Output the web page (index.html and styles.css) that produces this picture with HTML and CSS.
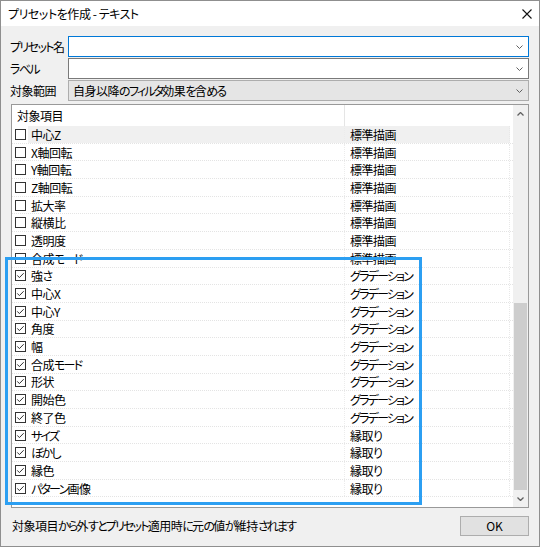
FILE: index.html
```html
<!DOCTYPE html>
<html lang="ja">
<head>
<meta charset="utf-8">
<title>プリセットを作成 - テキスト</title>
<link rel="stylesheet" href="styles.css">
</head>
<body>
<div class="window">
  <div class="titlebar">
    <span class="title">プリセットを作成 - テキスト</span>
    <svg class="close" width="10" height="10" viewBox="0 0 10 10"><path d="M0.5 0.5 L9.5 9.5 M9.5 0.5 L0.5 9.5" stroke="#111" stroke-width="1.1" fill="none"/></svg>
  </div>
  <div class="body">
    <div class="form">
      <label class="flabel"><span class="k">プリセット</span>名</label>
      <div class="combo focus"><span class="ctext"></span><svg class="chev" width="7" height="4" viewBox="0 0 7 4"><path d="M0.5 0.5 L3.5 3.5 L6.5 0.5" stroke="#606060" fill="none"/></svg></div>
      <label class="flabel"><span class="k">ラベル</span></label>
      <div class="combo"><span class="ctext"></span><svg class="chev" width="7" height="4" viewBox="0 0 7 4"><path d="M0.5 0.5 L3.5 3.5 L6.5 0.5" stroke="#606060" fill="none"/></svg></div>
      <label class="flabel">対象範囲</label>
      <div class="combo readonly"><span class="ctext">自身以降<span class="k">のフィルタ</span>効果<span class="k">を</span>含<span class="k">める</span></span><svg class="chev" width="7" height="4" viewBox="0 0 7 4"><path d="M0.5 0.5 L3.5 3.5 L6.5 0.5" stroke="#606060" fill="none"/></svg></div>
    </div>
    <div class="list">
      <div class="list-main">
        <div class="list-header"><div class="hcol1">対象項目</div><div class="hcol2"></div></div>
        <div class="rows">
          <div class="row selected"><span class="check"><svg width="11" height="11" viewBox="0 0 11 11"><rect x="0.5" y="0.5" width="10" height="10" fill="#fff" stroke="#333"/></svg></span><span class="cells"><span class="name">中心Z</span><span class="value">標準描画</span></span></div>
          <div class="row"><span class="check"><svg width="11" height="11" viewBox="0 0 11 11"><rect x="0.5" y="0.5" width="10" height="10" fill="#fff" stroke="#333"/></svg></span><span class="cells"><span class="name">X軸回転</span><span class="value">標準描画</span></span></div>
          <div class="row"><span class="check"><svg width="11" height="11" viewBox="0 0 11 11"><rect x="0.5" y="0.5" width="10" height="10" fill="#fff" stroke="#333"/></svg></span><span class="cells"><span class="name">Y軸回転</span><span class="value">標準描画</span></span></div>
          <div class="row"><span class="check"><svg width="11" height="11" viewBox="0 0 11 11"><rect x="0.5" y="0.5" width="10" height="10" fill="#fff" stroke="#333"/></svg></span><span class="cells"><span class="name">Z軸回転</span><span class="value">標準描画</span></span></div>
          <div class="row"><span class="check"><svg width="11" height="11" viewBox="0 0 11 11"><rect x="0.5" y="0.5" width="10" height="10" fill="#fff" stroke="#333"/></svg></span><span class="cells"><span class="name">拡大率</span><span class="value">標準描画</span></span></div>
          <div class="row"><span class="check"><svg width="11" height="11" viewBox="0 0 11 11"><rect x="0.5" y="0.5" width="10" height="10" fill="#fff" stroke="#333"/></svg></span><span class="cells"><span class="name">縦横比</span><span class="value">標準描画</span></span></div>
          <div class="row"><span class="check"><svg width="11" height="11" viewBox="0 0 11 11"><rect x="0.5" y="0.5" width="10" height="10" fill="#fff" stroke="#333"/></svg></span><span class="cells"><span class="name">透明度</span><span class="value">標準描画</span></span></div>
          <div class="row"><span class="check"><svg width="11" height="11" viewBox="0 0 11 11"><rect x="0.5" y="0.5" width="10" height="10" fill="#fff" stroke="#333"/></svg></span><span class="cells"><span class="name">合成<span class="k">モード</span></span><span class="value">標準描画</span></span></div>
          <div class="row"><span class="check"><svg width="11" height="11" viewBox="0 0 11 11"><rect x="0.5" y="0.5" width="10" height="10" fill="#fff" stroke="#333"/><path d="M2.3 5.4 L4.4 7.6 L8.7 3.2" stroke="#333" fill="none"/></svg></span><span class="cells"><span class="name">強<span class="k">さ</span></span><span class="value"><span class="k">グラデーション</span></span></span></div>
          <div class="row"><span class="check"><svg width="11" height="11" viewBox="0 0 11 11"><rect x="0.5" y="0.5" width="10" height="10" fill="#fff" stroke="#333"/><path d="M2.3 5.4 L4.4 7.6 L8.7 3.2" stroke="#333" fill="none"/></svg></span><span class="cells"><span class="name">中心X</span><span class="value"><span class="k">グラデーション</span></span></span></div>
          <div class="row"><span class="check"><svg width="11" height="11" viewBox="0 0 11 11"><rect x="0.5" y="0.5" width="10" height="10" fill="#fff" stroke="#333"/><path d="M2.3 5.4 L4.4 7.6 L8.7 3.2" stroke="#333" fill="none"/></svg></span><span class="cells"><span class="name">中心Y</span><span class="value"><span class="k">グラデーション</span></span></span></div>
          <div class="row"><span class="check"><svg width="11" height="11" viewBox="0 0 11 11"><rect x="0.5" y="0.5" width="10" height="10" fill="#fff" stroke="#333"/><path d="M2.3 5.4 L4.4 7.6 L8.7 3.2" stroke="#333" fill="none"/></svg></span><span class="cells"><span class="name">角度</span><span class="value"><span class="k">グラデーション</span></span></span></div>
          <div class="row"><span class="check"><svg width="11" height="11" viewBox="0 0 11 11"><rect x="0.5" y="0.5" width="10" height="10" fill="#fff" stroke="#333"/><path d="M2.3 5.4 L4.4 7.6 L8.7 3.2" stroke="#333" fill="none"/></svg></span><span class="cells"><span class="name">幅</span><span class="value"><span class="k">グラデーション</span></span></span></div>
          <div class="row"><span class="check"><svg width="11" height="11" viewBox="0 0 11 11"><rect x="0.5" y="0.5" width="10" height="10" fill="#fff" stroke="#333"/><path d="M2.3 5.4 L4.4 7.6 L8.7 3.2" stroke="#333" fill="none"/></svg></span><span class="cells"><span class="name">合成<span class="k">モード</span></span><span class="value"><span class="k">グラデーション</span></span></span></div>
          <div class="row"><span class="check"><svg width="11" height="11" viewBox="0 0 11 11"><rect x="0.5" y="0.5" width="10" height="10" fill="#fff" stroke="#333"/><path d="M2.3 5.4 L4.4 7.6 L8.7 3.2" stroke="#333" fill="none"/></svg></span><span class="cells"><span class="name">形状</span><span class="value"><span class="k">グラデーション</span></span></span></div>
          <div class="row"><span class="check"><svg width="11" height="11" viewBox="0 0 11 11"><rect x="0.5" y="0.5" width="10" height="10" fill="#fff" stroke="#333"/><path d="M2.3 5.4 L4.4 7.6 L8.7 3.2" stroke="#333" fill="none"/></svg></span><span class="cells"><span class="name">開始色</span><span class="value"><span class="k">グラデーション</span></span></span></div>
          <div class="row"><span class="check"><svg width="11" height="11" viewBox="0 0 11 11"><rect x="0.5" y="0.5" width="10" height="10" fill="#fff" stroke="#333"/><path d="M2.3 5.4 L4.4 7.6 L8.7 3.2" stroke="#333" fill="none"/></svg></span><span class="cells"><span class="name">終了色</span><span class="value"><span class="k">グラデーション</span></span></span></div>
          <div class="row"><span class="check"><svg width="11" height="11" viewBox="0 0 11 11"><rect x="0.5" y="0.5" width="10" height="10" fill="#fff" stroke="#333"/><path d="M2.3 5.4 L4.4 7.6 L8.7 3.2" stroke="#333" fill="none"/></svg></span><span class="cells"><span class="name"><span class="k">サイズ</span></span><span class="value">縁取<span class="k">り</span></span></span></div>
          <div class="row"><span class="check"><svg width="11" height="11" viewBox="0 0 11 11"><rect x="0.5" y="0.5" width="10" height="10" fill="#fff" stroke="#333"/><path d="M2.3 5.4 L4.4 7.6 L8.7 3.2" stroke="#333" fill="none"/></svg></span><span class="cells"><span class="name"><span class="k">ぼかし</span></span><span class="value">縁取<span class="k">り</span></span></span></div>
          <div class="row"><span class="check"><svg width="11" height="11" viewBox="0 0 11 11"><rect x="0.5" y="0.5" width="10" height="10" fill="#fff" stroke="#333"/><path d="M2.3 5.4 L4.4 7.6 L8.7 3.2" stroke="#333" fill="none"/></svg></span><span class="cells"><span class="name">縁色</span><span class="value">縁取<span class="k">り</span></span></span></div>
          <div class="row"><span class="check"><svg width="11" height="11" viewBox="0 0 11 11"><rect x="0.5" y="0.5" width="10" height="10" fill="#fff" stroke="#333"/><path d="M2.3 5.4 L4.4 7.6 L8.7 3.2" stroke="#333" fill="none"/></svg></span><span class="cells"><span class="name"><span class="k">パターン</span>画像</span><span class="value">縁取<span class="k">り</span></span></span></div>
        </div>
      </div>
      <div class="scrollbar">
        <div class="sb-arrow"><svg width="7" height="4" viewBox="0 0 7 4"><path d="M0.5 3.5 L3.5 0.5 L6.5 3.5" stroke="#606060" stroke-width="1.3" fill="none"/></svg></div>
        <div class="track"><div class="thumb"></div></div>
        <div class="sb-arrow"><svg width="7" height="4" viewBox="0 0 7 4"><path d="M0.5 0.5 L3.5 3.5 L6.5 0.5" stroke="#606060" stroke-width="1.3" fill="none"/></svg></div>
      </div>
    </div>
    <div class="footer">
      <span class="status">対象項目<span class="k">から</span>外<span class="k">すとプリセット</span>適用時<span class="k">に</span>元<span class="k">の</span>値<span class="k">が</span>維持<span class="k">されます</span></span>
      <button class="ok">OK</button>
    </div>
  </div>
  <div class="highlight"></div>
</div>
</body>
</html>
```
FILE: styles.css
```css
* { box-sizing: border-box; }
html, body { margin: 0; padding: 0; }
body {
  width: 540px;
  height: 547px;
  overflow: hidden;
  font-family: "Noto Sans CJK JP", "Noto Sans", sans-serif;
  font-size: 12px;
  font-feature-settings: "palt" 1;
  color: #000;
  background: #fff;
}
.window {
  position: relative;
  width: 540px;
  height: 547px;
  border: 1px solid #8f8f8f;
  background: #f0f0f0;
  display: flex;
  flex-direction: column;
  letter-spacing: -0.5px;
}
.k { letter-spacing: -1.8px; }
.titlebar {
  height: 25px;
  flex-shrink: 0;
  background: #fff;
  display: flex;
  align-items: center;
  justify-content: space-between;
  padding: 0 7px;
}
.title { line-height: 1; letter-spacing: -0.45px; white-space: nowrap; }
.close { display: block; }
.body {
  flex: 1;
  display: flex;
  flex-direction: column;
  padding: 10px 10px 0 9px;
}
.form {
  display: grid;
  grid-template-columns: 58px 1fr;
  grid-auto-rows: 21px;
  row-gap: 1px;
}
.flabel { display: flex; align-items: center; white-space: nowrap; }
.flabel .k { letter-spacing: -1.6px; }
.combo {
  border: 1px solid #7a7a7a;
  background: #fff;
  display: flex;
  align-items: center;
  justify-content: space-between;
  padding: 0 5px 0 4px;
}
.combo.focus { border-color: #0078d7; }
.combo.readonly { background: #e5e5e5; border-color: #adadad; }
.ctext { white-space: nowrap; }
.chev { display: block; flex-shrink: 0; }
.list {
  margin-top: 3px;
  margin-left: 1px;
  height: 404px;
  flex-shrink: 0;
  border: 1px solid #999;
  background: #fff;
  display: flex;
}
.list-main {
  flex: 1;
  display: flex;
  flex-direction: column;
  overflow: hidden;
}
.list-header {
  height: 21px;
  flex-shrink: 0;
  display: flex;
}
.hcol1 {
  width: 333px;
  padding-left: 5px;
  line-height: 21px;
  border-right: 1px solid #e5e5e5;
}
.hcol2 { width: 165px; }
.row {
  height: 17.7px;
  display: flex;
  border-bottom: 1px dotted #e4e4e4;
}
.check {
  width: 16px;
  flex-shrink: 0;
  padding-left: 3px;
  display: flex;
  align-items: center;
}
.check svg { display: block; }
.cells {
  width: 482px;
  display: flex;
  align-items: center;
  border-right: 1px dotted #e8e8e8;
}
.row.selected .cells { background: #f0f0f0; }
.name {
  width: 317px;
  padding-left: 3px;
  white-space: nowrap;
  align-self: stretch;
  display: flex;
  align-items: center;
  border-right: 1px dotted #ececec;
}
.value {
  padding-left: 5px;
  white-space: nowrap;
}
.scrollbar {
  width: 15px;
  flex-shrink: 0;
  background: #f0f0f0;
  display: flex;
  flex-direction: column;
}
.sb-arrow {
  height: 17px;
  flex-shrink: 0;
  display: flex;
  align-items: center;
  justify-content: center;
}
.sb-arrow svg { display: block; }
.track {
  flex: 1;
  display: flex;
  flex-direction: column;
  justify-content: flex-end;
}
.thumb {
  height: 187px;
  margin: 0 1px;
  background: #cdcdcd;
}
.footer {
  flex: 1;
  display: flex;
  align-items: center;
  justify-content: space-between;
  padding: 0 0 3px 2px;
}
.status { white-space: nowrap; }
.ok {
  width: 69px;
  height: 20px;
  margin: 0;
  padding: 0;
  font: inherit;
  letter-spacing: 0;
  color: #000;
  background: #e1e1e1;
  border: 1px solid #adadad;
}
.highlight {
  position: absolute;
  left: 4px;
  top: 256px;
  width: 417px;
  height: 248px;
  border: 3px solid #2c9ff2;
  pointer-events: none;
}
```
